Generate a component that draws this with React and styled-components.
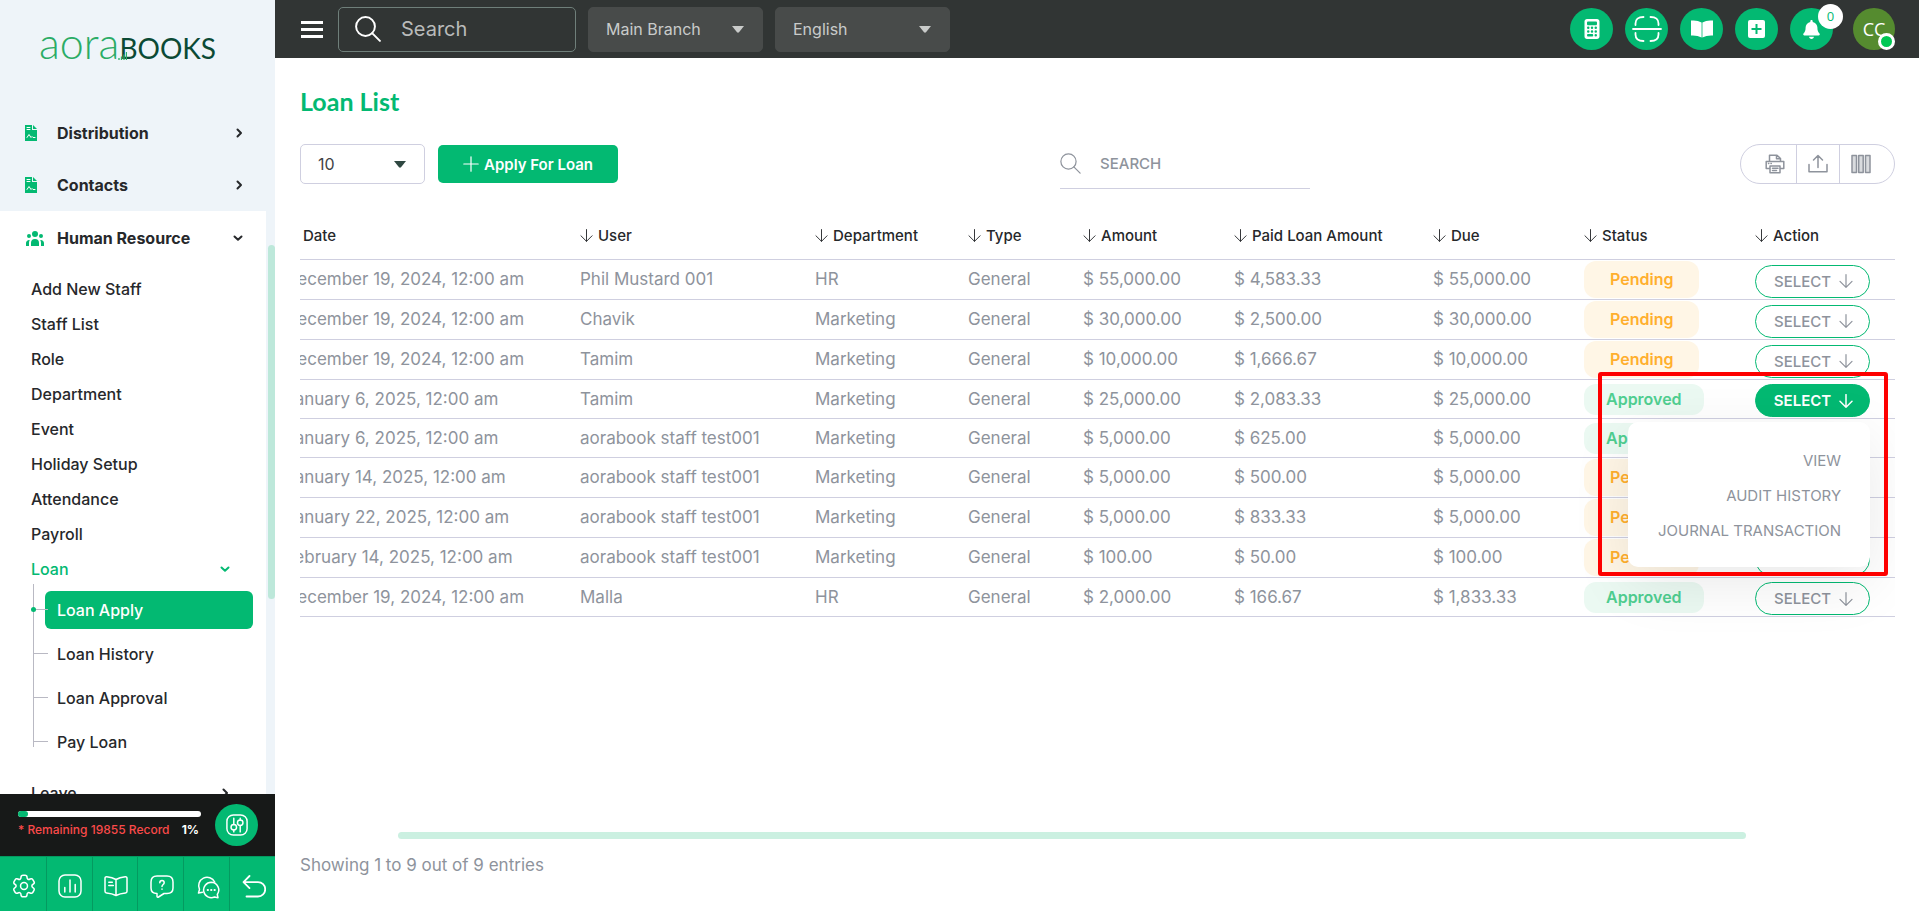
import React from 'react'
import styled, { createGlobalStyle, css } from 'styled-components'
import { FaBell, FaCalculator } from 'react-icons/fa6'
import { HiUserGroup } from 'react-icons/hi'

const green = `#03b972`
const ink = `#26282b`
const muted = `#8e939c`
const line = `#cfcfe0`

const subItems = [`Add New Staff`, `Staff List`, `Role`, `Department`, `Event`, `Holiday Setup`, `Attendance`, `Payroll`]
const loanItems = [`Loan Apply`, `Loan History`, `Loan Approval`, `Pay Loan`]

const columns = [
    { label: `Date`, width: 295 },
    { label: `User`, width: 235 },
    { label: `Department`, width: 153 },
    { label: `Type`, width: 115 },
    { label: `Amount`, width: 151 },
    { label: `Paid Loan Amount`, width: 199 },
    { label: `Due`, width: 151 },
    { label: `Status`, width: 171 },
    { label: `Action`, width: 140 }
]

const loans = [
    [`December 19, 2024, 12:00 am`, `Phil Mustard 001`, `HR`, `General`, `$ 55,000.00`, `$ 4,583.33`, `$ 55,000.00`, `Pending`],
    [`December 19, 2024, 12:00 am`, `Chavik`, `Marketing`, `General`, `$ 30,000.00`, `$ 2,500.00`, `$ 30,000.00`, `Pending`],
    [`December 19, 2024, 12:00 am`, `Tamim`, `Marketing`, `General`, `$ 10,000.00`, `$ 1,666.67`, `$ 10,000.00`, `Pending`],
    [`January 6, 2025, 12:00 am`, `Tamim`, `Marketing`, `General`, `$ 25,000.00`, `$ 2,083.33`, `$ 25,000.00`, `Approved`],
    [`January 6, 2025, 12:00 am`, `aorabook staff test001`, `Marketing`, `General`, `$ 5,000.00`, `$ 625.00`, `$ 5,000.00`, `Approved`],
    [`January 14, 2025, 12:00 am`, `aorabook staff test001`, `Marketing`, `General`, `$ 5,000.00`, `$ 500.00`, `$ 5,000.00`, `Pending`],
    [`January 22, 2025, 12:00 am`, `aorabook staff test001`, `Marketing`, `General`, `$ 5,000.00`, `$ 833.33`, `$ 5,000.00`, `Pending`],
    [`February 14, 2025, 12:00 am`, `aorabook staff test001`, `Marketing`, `General`, `$ 100.00`, `$ 50.00`, `$ 100.00`, `Pending`],
    [`December 19, 2024, 12:00 am`, `Malla`, `HR`, `General`, `$ 2,000.00`, `$ 166.67`, `$ 1,833.33`, `Approved`]
]

// Icons
const Icon = ({ size = 24, width, stroke = 1.5, box = `0 0 24 24`, children }) => (
    <svg width={width || size} height={size} viewBox={box} fill="none" stroke="currentColor" strokeWidth={stroke} strokeLinecap="round" strokeLinejoin="round" aria-hidden="true">
        {children}
    </svg>
)

const DocIcon = () => (
    <Icon width={12} size={16} box="0 0 12 16" stroke={1}>
        <path d="M0 0h7v5h5v11H0z" fill={green} stroke="none" />
        <path d="M8 0l4 4H8z" fill={green} stroke="none" />
        <path d="M2 2.5h3M2 4.5h3M2 12.5l2-3 2 3 1-1 1 1h2" stroke="#fff" />
    </Icon>
)
const Chevron = ({ down }) => (
    <Icon size={10} box="0 0 10 10" stroke={2}>
        <path d={down ? `M1.5 3.5L5 6.8l3.5-3.3` : `M3.5 1.5L7 5 3.5 8.5`} />
    </Icon>
)
const Caret = () => (
    <svg width="12" height="7" viewBox="0 0 12 7" fill="currentColor" aria-hidden="true"><path d="M0 0h12L7 6.3q-1 .9-2 0z" /></svg>
)
const SearchIcon = ({ size, stroke }) => (
    <Icon size={size} stroke={stroke}>
        <circle cx="9.7" cy="9.7" r="8.7" />
        <path d="M15.8 15.8L23 23" />
    </Icon>
)
const ArrowDown = ({ size, stroke = 1 }) => (
    <Icon size={size} box="0 0 14 14" stroke={stroke}>
        <path d="M7 .6v12.6M1 7.3l6 6 6-6" />
    </Icon>
)
const ScanIcon = () => (
    <Icon width={30} size={26} box="0 0 30 26" stroke={1.8}>
        <path d="M3.5 9V7.5q0-6.5 8-6.5M26.5 9V7.5q0-6.5-8-6.5M3.5 17v1.5q0 6.5 8 6.5M26.5 17v1.5q0 6.5-8 6.5M1 13h28" />
    </Icon>
)
const BookSolid = () => (
    <svg width="22" height="18" viewBox="0 0 22 18" fill="currentColor" aria-hidden="true">
        <path d="M0 .6Q6-.2 10.6 2.5V17.5Q6 15 0 15.5zM22 .6Q16-.2 11.4 2.5V17.5Q16 15 22 15.5z" />
    </svg>
)
const PlusBox = () => (
    <svg width="17" height="18" viewBox="0 0 17 18" aria-hidden="true">
        <rect width="17" height="18" rx="2" fill="currentColor" />
        <path d="M8.5 4v10M3.5 9h10" stroke={green} strokeWidth="2" />
    </svg>
)
const PrintIcon = () => (
    <Icon size={20} box="0 0 20 20">
        <path d="M4.5 7.5V1.2H12l3.5 3.3v3M11.5 1.5v3.3h3.5M4.5 14.5H1.2v-7h17.6v7H15.5M3.5 9.5h.3M6 9.5h.3" />
        <path d="M5 12h10v6.8H5zM7.5 14.3h5.5M7.5 16.5h4" />
    </Icon>
)
const UploadIcon = () => (
    <Icon size={20} box="0 0 20 20">
        <path d="M10 13.5V1.5M5.5 6L10 1.5 14.5 6M1 10.5v7.3h18v-7.3" />
    </Icon>
)
const ColumnsIcon = () => (
    <Icon size={20} box="0 0 20 20">
        <path d="M1 1.5h4.5v17H1zM7.7 1.5h4.5v17H7.7zM14.5 1.5H19v17h-4.5z" fill="#b4b8be" fillOpacity=".5" />
    </Icon>
)
const SlidersIcon = () => (
    <Icon size={22} stroke={1.6}>
        <rect x="1" y="1" width="22" height="22" rx="7" />
        <path d="M8.5 4.5v7M8.5 17.5v2M15.5 4.5v2M15.5 12.5v7" />
        <circle cx="8.5" cy="14.5" r="3" />
        <circle cx="15.5" cy="9.5" r="3" />
    </Icon>
)
const GearIcon = () => (
    <Icon size={26} stroke={1.4}>
        <g transform="rotate(90 12 12)">
            <circle cx="12" cy="12" r="3.2" />
            <path d="M2 12.88V11.12C2 10.08 2.85 9.22 3.9 9.22 5.71 9.22 6.45 7.94 5.54 6.37 5.02 5.47 5.33 4.3 6.24 3.78L7.97 2.79C8.76 2.32 9.78 2.6 10.25 3.39L10.36 3.58C11.26 5.15 12.74 5.15 13.65 3.58L13.76 3.39C14.23 2.6 15.25 2.32 16.04 2.79L17.77 3.78C18.68 4.3 18.99 5.47 18.47 6.37 17.56 7.94 18.3 9.22 20.11 9.22 21.15 9.22 22.01 10.07 22.01 11.12V12.88C22.01 13.92 21.16 14.78 20.11 14.78 18.3 14.78 17.56 16.06 18.47 17.63 18.99 18.54 18.68 19.7 17.77 20.22L16.04 21.21C15.25 21.68 14.23 21.4 13.76 20.61L13.65 20.42C12.75 18.85 11.27 18.85 10.36 20.42L10.25 20.61C9.78 21.4 8.76 21.68 7.97 21.21L6.24 20.22C5.33 19.7 5.02 18.53 5.54 17.63 6.45 16.06 5.71 14.78 3.9 14.78 2.85 14.78 2 13.92 2 12.88Z" />
        </g>
    </Icon>
)
const ChartIcon = () => (
    <Icon size={24}>
        <rect x="1" y="1" width="22" height="22" rx="6" />
        <path d="M6.8 18v-4.5M12 18V6M17.2 18v-7.5" />
    </Icon>
)
const BookIcon = () => (
    <Icon size={24}>
        <path d="M12 5.5v16M12 5.5C9.5 3.9 6 3 2.7 2.7 1.7 2.6 1 3.3 1 4.3v12.9c0 .9.7 1.7 1.6 1.8 3.3.3 6.6 1.1 9.4 2.5 2.8-1.4 6.1-2.2 9.4-2.5.9-.1 1.6-.9 1.6-1.8V4.3c0-1-.7-1.7-1.7-1.6C18 3 14.5 3.9 12 5.5zM4.8 8.3h3.5M4.8 11.5h4.5" />
    </Icon>
)
const QuestionIcon = () => (
    <Icon size={24}>
        <path d="M7 19.5C3 19.5 1 18 1 14V8c0-4 2-6 6-6h10c4 0 6 2 6 6v6c0 4-2 5.5-6 5.5h-3L8.5 23c-.7.4-1.5 0-1.5-.8z" />
        <path d="M9.8 8.8c0-3 4.4-3 4.4 0 0 1.7-2.2 1.8-2.2 3.7M12 15v.2" />
    </Icon>
)
const ChatsIcon = () => (
    <Icon width={25} size={25} box="0 0 25 25">
        <path d="M7.5 18.2l-4 .8 1-3.6A8.4 8.4 0 1 1 19.7 8" />
        <path d="M16.2 8.3a7.7 7.7 0 1 0 3.3 14.7l3.5.7-.7-3.2A7.7 7.7 0 0 0 16.2 8.3z" />
        <path d="M12.8 16h.1M16.2 16h.1M19.6 16h.1" strokeWidth="2.2" />
    </Icon>
)
const UndoIcon = () => (
    <Icon size={24} stroke={1.8}>
        <path d="M4.5 22.5H16a7.2 7.2 0 0 0 0-14.4H1.5M7.5 2l-6 6.1 6 6" />
    </Icon>
)

const HeaderSelect = ({ label, value }) => (
    <SelectWrap $dark>
        <Select aria-label={label} defaultValue={value} $dark><option>{value}</option></Select>
        <Caret />
    </SelectWrap>
)

const LoanRow = ({ loan, open }) => {
    const status = loan[7]

    return (
        <tr>
            {loan.slice(0, 7).map((value, i) => <Td key={i}>{value}</Td>)}
            <Td><Status $approved={status === `Approved`}>{status}</Status></Td>
            <ActionTd>
                <Action>
                    <ActionButton type="button" $open={open} aria-expanded={!!open}>SELECT <ArrowDown size={14} stroke={open ? 1.5 : 1.2} /></ActionButton>
                    {open &&
                        <>
                            <Menu>
                                <MenuLink href="#view">VIEW</MenuLink>
                                <MenuLink href="#audit">AUDIT HISTORY</MenuLink>
                                <MenuLink href="#journal">JOURNAL TRANSACTION</MenuLink>
                            </Menu>
                            <Highlight />
                        </>
                    }
                </Action>
            </ActionTd>
        </tr>
    )
}

const App = () => (
    <Page>
        <GlobalStyle />
        <Sidebar>
            <Logo href="#home" aria-label="aoraBOOKS">
                <LogoSoft>aora</LogoSoft>
                <LogoStrong>BOOKS</LogoStrong>
                <LogoBars width="9" height="8" viewBox="0 0 9 8" aria-hidden="true">
                    <path d="M1 8V6M3.5 8V4.5M6 8V2.5M8.5 8V0" stroke="#2bac66" strokeWidth="1.3" />
                </LogoBars>
            </Logo>
            <Nav>
                <NavLink href="#distribution"><DocIcon /><span>Distribution</span><Chevron /></NavLink>
                <NavLink href="#contacts"><DocIcon /><span>Contacts</span><Chevron /></NavLink>
                <NavGroup>
                    <NavLink href="#hr"><HiUserGroup size={20} color={green} /><span>Human Resource</span><Chevron down /></NavLink>
                    <SubNav>
                        {subItems.map(item => <SubLink key={item} href="#hr">{item}</SubLink>)}
                        <SubLink href="#loan" $active>Loan<Chevron down /></SubLink>
                        <LoanNav>
                            {loanItems.map((item, i) => <LoanLink key={item} href="#loan" $active={i === 0}>{item}</LoanLink>)}
                        </LoanNav>
                        <SubLink href="#leave">Leave<Chevron /></SubLink>
                    </SubNav>
                    <NavScroll><NavThumb /></NavScroll>
                </NavGroup>
            </Nav>
            <Usage>
                <UsageInfo>
                    <UsageBar><UsageFill /></UsageBar>
                    <UsageText>* Remaining 19855 Record <b>1%</b></UsageText>
                </UsageInfo>
                <RoundButton type="button" aria-label="Preferences"><SlidersIcon /></RoundButton>
            </Usage>
            <Dock>
                <DockButton type="button" aria-label="Settings"><GearIcon /></DockButton>
                <DockButton type="button" aria-label="Reports"><ChartIcon /></DockButton>
                <DockButton type="button" aria-label="Guide"><BookIcon /></DockButton>
                <DockButton type="button" aria-label="Help"><QuestionIcon /></DockButton>
                <DockButton type="button" aria-label="Chat"><ChatsIcon /></DockButton>
                <DockButton type="button" aria-label="Back"><UndoIcon /></DockButton>
            </Dock>
        </Sidebar>
        <Content>
            <TopBar>
                <Burger type="button" aria-label="Toggle menu"><i /><i /><i /></Burger>
                <TopSearch>
                    <SearchIcon size={26} stroke={1.8} />
                    <input type="text" placeholder="Search" aria-label="Search" />
                </TopSearch>
                <HeaderSelect label="Branch" value="Main Branch" />
                <HeaderSelect label="Language" value="English" />
                <TopActions>
                    <RoundButton type="button" aria-label="Calculator"><FaCalculator size={20} /></RoundButton>
                    <RoundButton type="button" aria-label="Scan"><ScanIcon /></RoundButton>
                    <RoundButton type="button" aria-label="Manual"><BookSolid /></RoundButton>
                    <RoundButton type="button" aria-label="Add"><PlusBox /></RoundButton>
                    <RoundButton type="button" aria-label="Notifications"><FaBell size={19} /><Count>0</Count></RoundButton>
                    <Avatar type="button" aria-label="Account">CC<Online /></Avatar>
                </TopActions>
            </TopBar>
            <Main>
                <Title>Loan List</Title>
                <Toolbar>
                    <SelectWrap>
                        <Select aria-label="Entries per page" defaultValue="10"><option>10</option></Select>
                        <Caret />
                    </SelectWrap>
                    <ApplyButton type="button">
                        <Icon size={16} box="0 0 16 16" stroke={1.2}><path d="M8 .8v14.4M.8 8h14.4" /></Icon>
                        Apply For Loan
                    </ApplyButton>
                    <TableSearch>
                        <SearchIcon size={21} stroke={1.4} />
                        <input type="text" placeholder="SEARCH" aria-label="Search loans" />
                    </TableSearch>
                    <Tools>
                        <ToolButton type="button" aria-label="Print"><PrintIcon /></ToolButton>
                        <ToolButton type="button" aria-label="Export"><UploadIcon /></ToolButton>
                        <ToolButton type="button" aria-label="Columns"><ColumnsIcon /></ToolButton>
                    </Tools>
                </Toolbar>
                <TableScroll>
                    <Table>
                        <colgroup>
                            {columns.map(col => <Col key={col.label} $width={col.width} />)}
                        </colgroup>
                        <thead>
                            <tr>
                                {columns.map(col => <Th key={col.label}><ThInner><ArrowDown size={13} /><span>{col.label}</span></ThInner></Th>)}
                            </tr>
                        </thead>
                        <tbody>
                            {loans.map((loan, i) => <LoanRow key={i} loan={loan} open={i === 3} />)}
                        </tbody>
                    </Table>
                </TableScroll>
                <ScrollThumb />
                <Entries>Showing 1 to 9 out of 9 entries</Entries>
            </Main>
        </Content>
    </Page>
)

export default App

// Styled Components
const GlobalStyle = createGlobalStyle`
    * { box-sizing:border-box; }
    body {
        margin:0;
        background:#fff;
        color:${ink};
        font-family:Inter, "Liberation Sans", sans-serif;
        font-size:16px;
    }
    button, input, select { font:inherit; color:inherit; }
    button { cursor:pointer; }
    a { color:inherit; text-decoration:none; }
    svg { flex-shrink:0; display:block; }
`
const Page = styled.div`
    display:grid;
    grid-template-columns:275px minmax(0,1fr);
    height:100vh;
`
const Sidebar = styled.aside`
    display:flex;
    flex-direction:column;
    min-height:0;
    background:#eef4f9;
`
const Logo = styled.a`
    display:flex;
    align-items:baseline;
    position:relative;
    height:107px;
    padding:20px 0 0 39px;
    font-family:Lato, sans-serif;
    line-height:46px;
`
const LogoSoft = styled.span`
    font-size:43px;
    font-weight:300;
    color:#2bac66;
`
const LogoStrong = styled.span`
    font-size:28px;
    color:#0b4a35;
`
const LogoBars = styled.svg`
    position:absolute;
    left:118px;
    top:52px;
`
const Nav = styled.nav`
    flex:1;
    min-height:0;
    overflow:hidden;
`
const NavLink = styled.a`
    display:grid;
    grid-template-columns:32px 1fr 10px;
    align-items:center;
    height:52px;
    padding:0 31px 0 25px;
    font-weight:700;
`
const NavGroup = styled.div`
    display:grid;
    grid-template-columns:minmax(0,1fr) 9px;
    grid-template-rows:54px auto;
    background:#fff;
    ${NavLink} {
        height:54px;
        padding-right:23px;
    }
`
const SubNav = styled.div`
    grid-row:2;
    padding:6px 13px 0 31px;
`
const SubLink = styled.a`
    display:flex;
    align-items:center;
    justify-content:space-between;
    height:35px;
    padding-right:23px;
    font-weight:500;
    color:${props => props.$active ? green : ink};
`
const LoanNav = styled.div`
    display:grid;
    grid-row-gap:6px;
    margin:5px 0 14px 2px;
    padding-left:12px;
    position:relative;
    &::before {
        content:"";
        position:absolute;
        left:0;
        top:-7px;
        bottom:14px;
        width:1px;
        background:#b9b9c3;
    }
`
const LoanLink = styled.a`
    display:flex;
    align-items:center;
    position:relative;
    height:38px;
    padding-left:12px;
    border-radius:6px;
    font-weight:500;
    &::before {
        content:"";
        position:absolute;
        left:-12px;
        top:18px;
        width:15px;
        height:1px;
        background:#b9b9c3;
    }
    ${props => props.$active && css`
        background:${green};
        color:#fff;
        &::after {
            content:"";
            position:absolute;
            left:-14px;
            top:16px;
            width:5px;
            height:5px;
            border-radius:50%;
            background:${green};
        }
    `}
`
const NavScroll = styled.div`
    grid-column:2;
    grid-row:1/3;
    padding:34px 0 0 2px;
    background:#eef4f9;
`
const NavThumb = styled.div`
    height:354px;
    border-radius:4px;
    background:#bde8da;
`
const Usage = styled.div`
    display:flex;
    align-items:center;
    justify-content:space-between;
    height:62px;
    padding:0 17px 0 18px;
    background:#171918;
`
const UsageInfo = styled.div`
    width:183px;
`
const UsageBar = styled.div`
    height:6px;
    border-radius:3px;
    background:#fff;
`
const UsageFill = styled.div`
    width:10px;
    height:6px;
    border-radius:3px;
    background:${green};
`
const UsageText = styled.div`
    display:flex;
    justify-content:space-between;
    margin-top:4px;
    padding-right:2px;
    font-size:12px;
    font-weight:500;
    line-height:18px;
    white-space:nowrap;
    color:#fb4a4a;
    b { color:#fff; }
`
const RoundButton = styled.button`
    display:flex;
    align-items:center;
    justify-content:center;
    position:relative;
    width:43px;
    height:42px;
    padding:0;
    border:0;
    border-radius:50%;
    background:${green};
    color:#fff;
`
const Dock = styled.div`
    display:grid;
    grid-template-columns:repeat(6,1fr);
    height:55px;
    background:${green};
    border-top:1px solid #049a60;
`
const DockButton = styled.button`
    display:flex;
    align-items:center;
    justify-content:center;
    padding:4px 0 0 2px;
    border:0;
    background:none;
    color:#fff;
    & + & { border-left:1px solid #049a60; }
`
const Content = styled.div`
    display:flex;
    flex-direction:column;
    min-width:0;
    min-height:0;
`
const TopBar = styled.header`
    display:flex;
    align-items:center;
    height:58px;
    padding:0 24px 0 26px;
    background:#313534;
    color:#c9cbca;
`
const Burger = styled.button`
    display:grid;
    gap:4px;
    width:22px;
    margin-right:15px;
    padding:0;
    border:0;
    background:none;
    i {
        height:3px;
        background:#fff;
    }
`
const TopSearch = styled.label`
    display:flex;
    align-items:center;
    gap:20px;
    width:238px;
    height:45px;
    padding-left:16px;
    border:1px solid #6f7f7a;
    border-radius:5px;
    color:#fff;
    input {
        width:150px;
        padding:0;
        border:0;
        background:none;
        outline:0;
        font-size:20px;
    }
    input::placeholder { color:#b9bbba; opacity:1; }
`
const SelectWrap = styled.div`
    display:flex;
    align-items:center;
    position:relative;
    width:125px;
    height:40px;
    color:#2f4842;
    svg {
        position:absolute;
        right:19px;
        pointer-events:none;
    }
    ${props => props.$dark && css`
        width:175px;
        height:45px;
        margin-left:12px;
        color:#c9cbca;
    `}
`
const Select = styled.select`
    appearance:none;
    width:100%;
    height:100%;
    padding:0 17px;
    border:1px solid ${line};
    border-radius:5px;
    background:#fff;
    color:#414346;
    ${props => props.$dark && css`
        border-color:#484b4a;
        background:#484b4a;
        color:#c9cbca;
    `}
`
const TopActions = styled.div`
    display:flex;
    gap:12px;
    margin-left:auto;
`
const Count = styled.span`
    position:absolute;
    top:-4px;
    right:-10px;
    width:25px;
    height:25px;
    border-radius:50%;
    background:#fff;
    color:${green};
    font-family:"Open Sans", sans-serif;
    font-size:13px;
    line-height:25px;
`
const Avatar = styled(RoundButton)`
    width:42px;
    margin-left:8px;
    background:#558b2f;
    font-family:"Open Sans", sans-serif;
    font-size:18px;
`
const Online = styled.span`
    position:absolute;
    right:0;
    bottom:0;
    width:17px;
    height:17px;
    border:3px solid #fff;
    border-radius:50%;
    background:#00c853;
`
const Main = styled.main`
    flex:1;
    display:flex;
    flex-direction:column;
    min-height:0;
    padding:27px 24px 34px 25px;
`
const Title = styled.h1`
    margin:0;
    font-family:Lato, sans-serif;
    font-size:25px;
    font-weight:700;
    line-height:32px;
    color:${green};
`
const Toolbar = styled.div`
    display:grid;
    grid-template-columns:auto auto minmax(0,1fr) auto;
    align-items:center;
    column-gap:13px;
    margin-top:22px;
`
const ApplyButton = styled.button`
    display:flex;
    align-items:center;
    gap:5px;
    height:38px;
    padding:0 25px;
    border:0;
    border-radius:5px;
    background:${green};
    color:#fff;
    font-size:15px;
    font-weight:600;
`
const TableSearch = styled.label`
    display:flex;
    align-items:center;
    justify-self:center;
    gap:19px;
    width:250px;
    height:50px;
    margin-left:12px;
    border-bottom:1px solid ${line};
    color:${muted};
    input {
        width:180px;
        padding:0;
        border:0;
        outline:0;
        font-size:15px;
        font-weight:500;
    }
    input::placeholder { color:${muted}; opacity:1; }
`
const Tools = styled.div`
    display:flex;
    height:40px;
    padding:0 12px;
    border:1px solid ${line};
    border-radius:20px;
`
const ToolButton = styled.button`
    display:flex;
    align-items:center;
    justify-content:center;
    width:43px;
    padding:0;
    border:0;
    background:none;
    color:${muted};
    & + & { border-left:1px solid ${line}; }
`
const TableScroll = styled.div`
    flex:1;
    min-height:0;
    overflow:hidden;
    margin-top:23px;
`
// Scrolled a little to the right, so the first column is partly cut
const Table = styled.table`
    width:calc(100% + 15px);
    margin-left:-15px;
    table-layout:fixed;
    border-collapse:separate;
    border-spacing:0;
    color:${muted};
    font-size:17px;
    line-height:25px;
    white-space:nowrap;
`
const Col = styled.col`
    width:${props => props.$width}px;
`
const Th = styled.th`
    height:48px;
    padding:0;
    border-bottom:1px solid ${line};
    text-align:left;
    font-size:15px;
    font-weight:500;
    color:${ink};
`
const ThInner = styled.div`
    display:flex;
    align-items:center;
    gap:5px;
`
const Td = styled.td`
    padding:1px 0;
    border-bottom:1px solid ${line};
`
const Status = styled.span`
    display:block;
    width:fit-content;
    padding:6px 26px;
    border-radius:12px;
    background:#fff6e6;
    color:#ffaf2e;
    font-size:16px;
    font-weight:600;
    ${props => props.$approved && css`
        padding:3px 22px;
        background:#ebf9f2;
        color:#4fce90;
    `}
`
const ActionTd = styled(Td)`
    padding:4px 0 1px;
`
const Action = styled.div`
    position:relative;
    width:115px;
`
const ActionButton = styled.button`
    display:flex;
    align-items:center;
    justify-content:center;
    gap:8px;
    width:115px;
    height:33px;
    padding:0 0 0 2px;
    border:1px solid ${green};
    border-radius:17px;
    background:${props => props.$open ? green : `#fff`};
    color:${props => props.$open ? `#fff` : muted};
    font-size:15px;
    font-weight:${props => props.$open ? 600 : 500};
`
const Menu = styled.div`
    position:absolute;
    z-index:1;
    top:38px;
    right:0;
    display:grid;
    width:242px;
    padding:21px 30px 19px;
    border-radius:10px;
    background:#fff;
    box-shadow:0 16px 60px rgba(0,0,0,.09);
    text-align:right;
`
const MenuLink = styled.a`
    font-size:15px;
    line-height:35px;
`
const Highlight = styled.div`
    position:absolute;
    z-index:2;
    top:-12px;
    right:-18px;
    width:290px;
    height:204px;
    border:4px solid #fe0000;
    border-radius:3px;
    pointer-events:none;
`
const ScrollThumb = styled.div`
    height:7px;
    margin:0 149px 0 98px;
    border-radius:4px;
    background:#cbf0e1;
`
const Entries = styled.p`
    margin:14px 0 0;
    font-size:17px;
    line-height:24px;
    color:${muted};
`
